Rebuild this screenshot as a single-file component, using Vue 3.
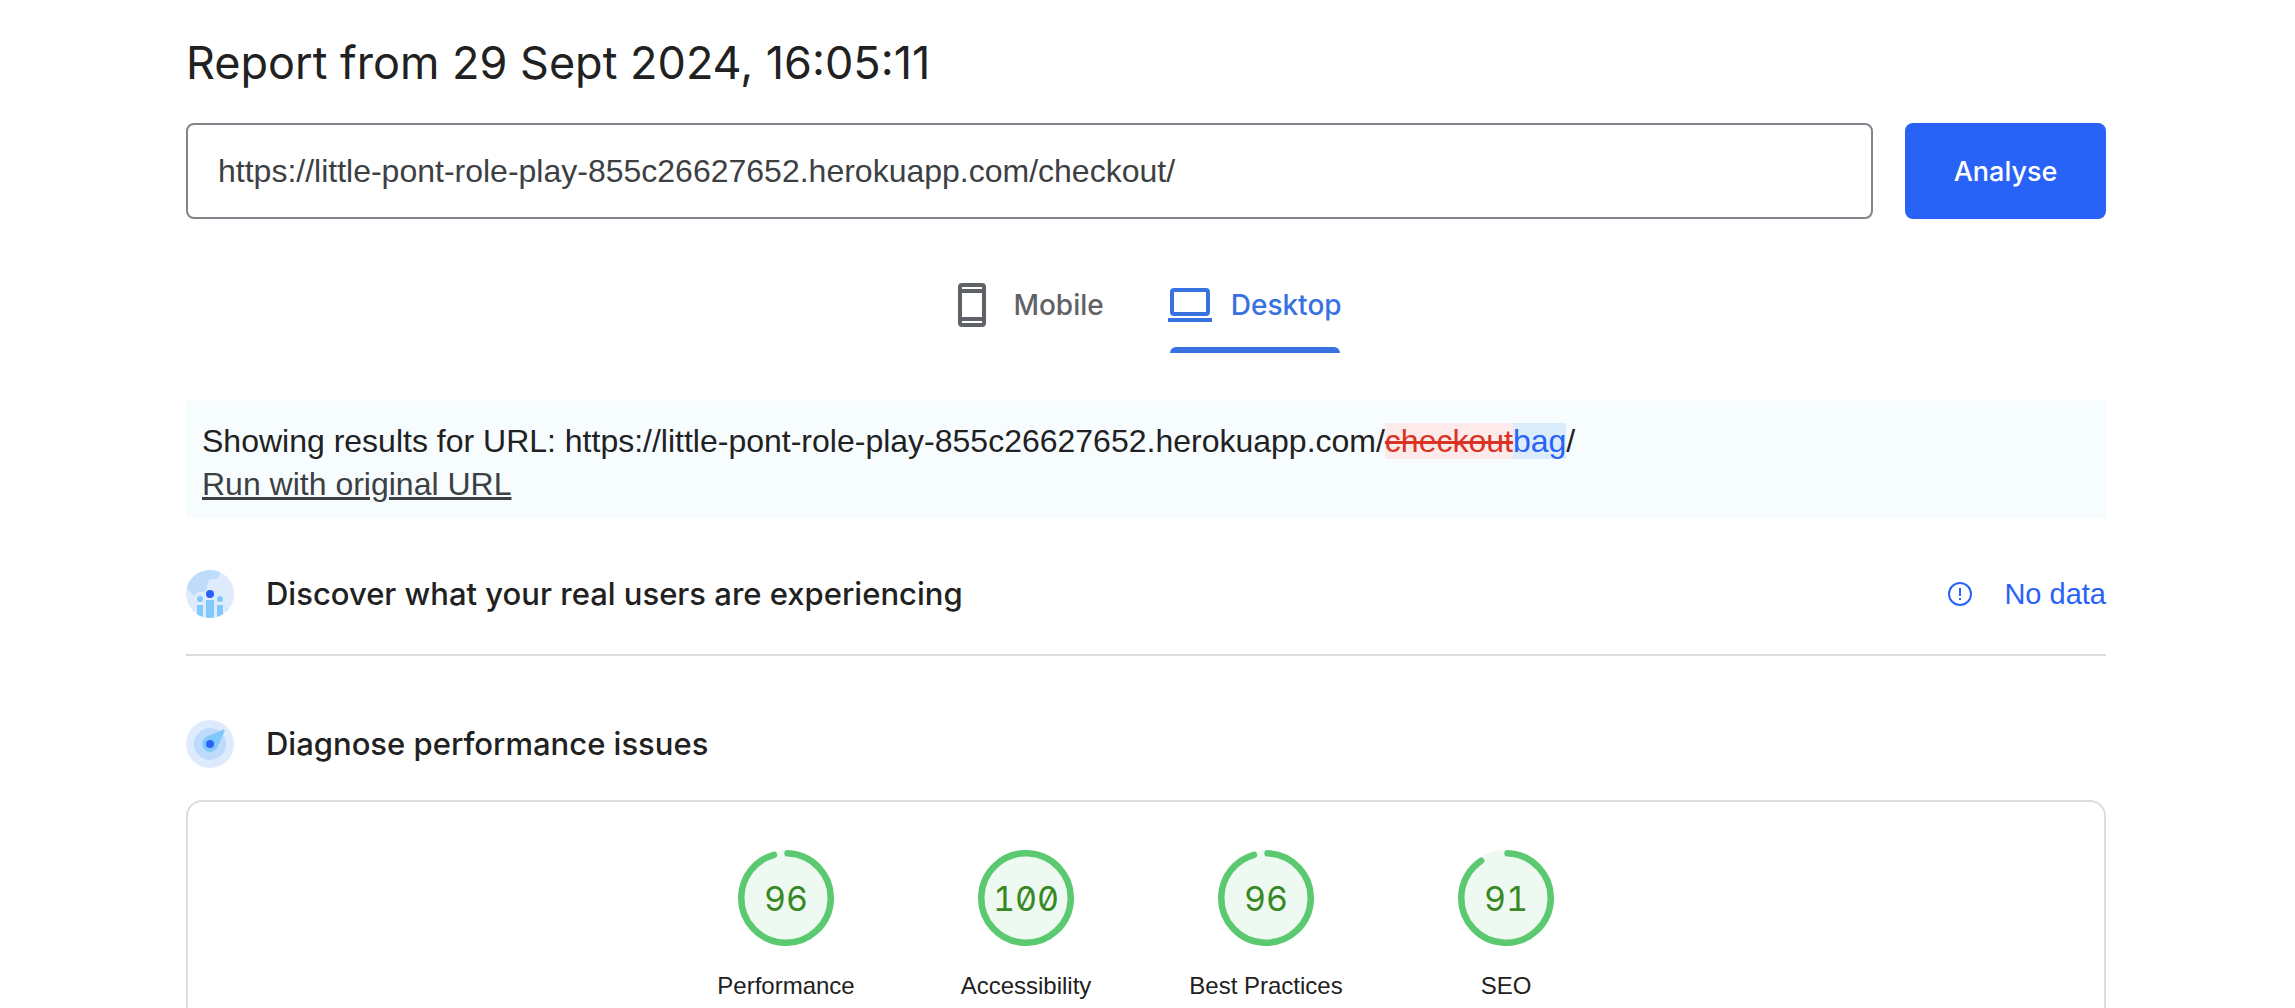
<script setup>
import { ref } from 'vue'

const url = ref('https://little-pont-role-play-855c26627652.herokuapp.com/checkout/')

const radius = 44.75
const circumference = 2 * Math.PI * radius

const gauges = [
  { label: 'Performance', score: 96 },
  { label: 'Accessibility', score: 100 },
  { label: 'Best Practices', score: 96 },
  { label: 'SEO', score: 91 },
]

// Rounded line caps extend past the arc, so partial arcs are shortened a little.
function dash(score) {
  const length = score === 100 ? circumference : (score / 100) * circumference - 3
  return `${length} ${circumference}`
}
</script>

<template>
  <main class="page">
    <h1 class="title">Report from 29 Sept 2024, 16:05:11</h1>

    <form class="search" @submit.prevent>
      <input v-model="url" class="url" type="text" aria-label="Web page URL" />
      <button class="analyse" type="submit">Analyse</button>
    </form>

    <nav class="tabs">
      <button class="tab" type="button">
        <svg class="phone" width="28" height="44" viewBox="0 0 28 44" aria-hidden="true">
          <path
            fill="currentColor"
            fill-rule="evenodd"
            d="M4 0h20a4 4 0 0 1 4 4v36a4 4 0 0 1-4 4H4a4 4 0 0 1-4-4V4a4 4 0 0 1 4-4zM4 4v2h20V4zM4 10v24h20V10zM4 38v2h20v-2z"
          />
        </svg>
        <span>Mobile</span>
      </button>
      <button class="tab active" type="button">
        <svg class="laptop" width="44" height="34" viewBox="0 0 44 34" aria-hidden="true">
          <path
            fill="currentColor"
            fill-rule="evenodd"
            d="M6 0h32a4 4 0 0 1 4 4v20a4 4 0 0 1-4 4H6a4 4 0 0 1-4-4V4a4 4 0 0 1 4-4zM6 4v20h32V4zM0 30h44v4H0z"
          />
        </svg>
        <span>Desktop</span>
      </button>
    </nav>

    <section class="notice">
      <div>
        Showing results for URL: https://little-pont-role-play-855c26627652.herokuapp.com/<del>checkout</del><ins>bag</ins>/
      </div>
      <a href="#">Run with original URL</a>
    </section>

    <section class="heading users">
      <svg width="48" height="48" viewBox="0 0 48 48" aria-hidden="true">
        <clipPath id="disc"><circle cx="24" cy="24" r="24" /></clipPath>
        <g clip-path="url(#disc)">
          <path fill="#deebfd" d="M0 0h48v48H0z" />
          <path
            fill="#bfdbfb"
            d="M0 18L8 26l4-4h4c3 0 5-2 5-4 0-2-1-3 1-6 1-3 3-3 6-3 4 0 6-3 6-6V0H0z"
          />
          <path fill="#80c9fa" d="M11 35h6v13h-6zM20 30h8v18h-8zM31 35h6v13h-6z" />
          <path fill="#bfdbfb" d="M40 38h1v4h-1z" />
          <circle fill="#80c9fa" cx="14" cy="29" r="3" />
          <circle fill="#80c9fa" cx="34" cy="29" r="3" />
          <circle fill="#2962f6" cx="24" cy="24" r="4" />
        </g>
      </svg>
      <h2>Discover what your real users are experiencing</h2>
      <div class="status">
        <svg width="24" height="24" viewBox="0 0 24 24" aria-hidden="true">
          <circle cx="12" cy="12" r="11" fill="none" stroke="currentColor" stroke-width="2" />
          <path fill="currentColor" d="M11 6h2v8h-2zM11 16h2v2h-2z" />
        </svg>
        <span>No data</span>
      </div>
    </section>

    <section class="heading diagnose">
      <svg width="48" height="48" viewBox="0 0 48 48" aria-hidden="true">
        <circle fill="#deebfd" cx="24" cy="24" r="24" />
        <circle fill="#bfdbfb" cx="24" cy="24" r="16" />
        <path
          fill="#80c9fa"
          d="M21 16.500L37 9.500Q39.500 9 38.500 11.500L31.500 27A8 8 0 1 1 21 16.500z"
        />
        <circle fill="#2962f6" cx="24" cy="24" r="4" />
      </svg>
      <h2>Diagnose performance issues</h2>
    </section>

    <section class="card">
      <a v-for="g in gauges" :key="g.label" class="gauge" href="#">
        <div class="dial">
          <svg width="96" height="96" viewBox="0 0 96 96" aria-hidden="true">
            <circle cx="48" cy="48" r="48" fill="#eef9f2" />
            <circle
              cx="48"
              cy="48"
              :r="radius"
              fill="none"
              stroke="#5bc970"
              stroke-width="6.500"
              stroke-linecap="round"
              :stroke-dasharray="dash(g.score)"
              transform="rotate(-88 48 48)"
            />
          </svg>
          <span class="score">{{ g.score }}</span>
        </div>
        <span class="label">{{ g.label }}</span>
      </a>
    </section>
  </main>
</template>

<style>
body {
  background: #fff;
}
</style>

<style scoped>
.page {
  padding: 32px 189px 0 186px;
  color: #212121;
  font-family: "Liberation Sans", Arial, sans-serif;
  overflow: hidden;
}

.title {
  margin: 0;
  font: 400 45px/62px Inter, sans-serif;
}

.search {
  display: flex;
  gap: 32px;
  margin-top: 29px;
}

.url {
  flex: 1;
  box-sizing: border-box;
  min-width: 0;
  height: 96px;
  padding: 0 30px;
  border: 2px solid #80868b;
  border-radius: 8px;
  background: #fff;
  color: #3c4043;
  font: 32px "Liberation Sans", Arial, sans-serif;
}

.analyse {
  width: 201px;
  border: 0;
  border-radius: 8px;
  background: #2962f6;
  color: #fff;
  font: 500 27px Inter, sans-serif;
}

.tabs {
  display: flex;
  justify-content: center;
  gap: 64px;
  margin-top: 48px;
  padding-left: 8px;
}

.tab {
  display: flex;
  align-items: center;
  position: relative;
  height: 86px;
  padding: 0 0 10px;
  border: 0;
  background: none;
  color: #5f6368;
  font: 500 28px Inter, sans-serif;
}

.phone {
  margin-right: 27px;
}

.laptop {
  margin-right: 19px;
}

.active {
  color: #3871e0;
}

.active::after {
  content: "";
  position: absolute;
  right: 2px;
  bottom: 0;
  left: 2px;
  height: 6px;
  border-radius: 6px 6px 0 0;
  background: currentColor;
}

.notice {
  margin-top: 48px;
  padding: 19px 16px 12px;
  background: #f7fcff;
  font-size: 32px;
  line-height: 43px;
}

.notice a {
  color: #3c4043;
  text-decoration-thickness: 3px;
}

.notice del {
  background: #fdeaea;
  color: #d93423;
  text-decoration-thickness: 3px;
}

.notice ins {
  background: #dbedfa;
  color: #2962f6;
  text-decoration: none;
}

.heading {
  display: flex;
  align-items: center;
  gap: 32px;
}

.heading h2 {
  margin: 0;
  font: 500 31px/48px Inter, sans-serif;
}

.users {
  margin-top: 52px;
  padding-bottom: 36px;
  border-bottom: 2px solid #dadce0;
}

.status {
  display: flex;
  align-items: center;
  gap: 32px;
  margin-left: auto;
  color: #2962f6;
  font-size: 29px;
}

.diagnose {
  margin-top: 64px;
}

.card {
  display: flex;
  justify-content: center;
  margin-top: 32px;
  padding: 48px 0;
  border: 2px solid #dadce0;
  border-bottom: 0;
  border-radius: 16px 16px 0 0;
}

.gauge {
  display: flex;
  flex-direction: column;
  align-items: center;
  width: 240px;
  color: #212121;
  text-decoration: none;
}

.dial {
  display: grid;
  place-items: center;
  height: 96px;
}

.dial > * {
  grid-area: 1 / 1;
}

.score {
  color: #388824;
  font: 34px Inter, sans-serif;
  font-feature-settings: "zero", "tnum";
}

.label {
  margin-top: 24px;
  font-size: 24px;
  line-height: 32px;
}
</style>
